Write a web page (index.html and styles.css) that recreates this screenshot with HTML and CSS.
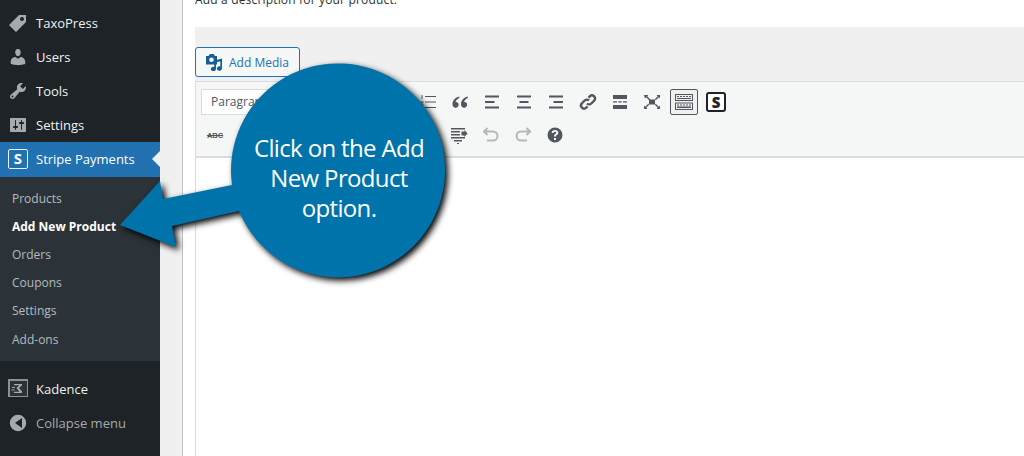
FILE: index.html
```html
<!DOCTYPE html>
<html lang="en">
<head>
<meta charset="utf-8">
<title>Add New Product</title>
<link rel="stylesheet" href="styles.css">
</head>
<body>
<div class="page">
  <aside class="sidebar">
    <ul class="menu">
      <li class="item"><svg class="mi" viewBox="0 0 20 20"><path d="M11 2h7v7L8 19l-7-7zm3 6c1.100 0 2-.9 2-2s-.9-2-2-2-2 .9-2 2 .9 2 2 2z"/></svg>TaxoPress</li>
      <li class="item"><svg class="mi" viewBox="0 0 20 20"><path d="M10 9.250c-2.270 0-2.730-3.440-2.730-3.440C7 4.020 7.820 2 9.970 2c2.160 0 2.980 2.020 2.710 3.810 0 0-.41 3.440-2.680 3.440zm0 2.570L12.720 10c2.390 0 4.520 2.330 4.520 4.530v2.490s-3.650 1.130-7.240 1.130c-3.650 0-7.240-1.130-7.240-1.130v-2.490c0-2.250 1.940-4.480 4.470-4.480z"/></svg>Users</li>
      <li class="item"><svg class="mi" viewBox="0 0 20 20"><path d="M16.680 9.770c-1.340 1.340-3.300 1.670-4.950.99l-5.410 6.520c-.99.99-2.590.99-3.580 0s-.99-2.590 0-3.570l6.520-5.420c-.68-1.650-.35-3.610.99-4.950 1.280-1.280 3.120-1.620 4.720-1.060l-2.890 2.890 2.820 2.820 2.860-2.870c.53 1.580.18 3.390-1.080 4.650zM3.810 16.210c.4.390 1.040.39 1.430 0 .4-.4.4-1.040 0-1.430-.39-.4-1.030-.4-1.430 0-.39.39-.39 1.030 0 1.430z"/></svg>Tools</li>
      <li class="item"><svg class="mi" viewBox="0 0 20 20"><path d="M18 16V4c0-.55-.45-1-1-1H3c-.55 0-1 .45-1 1v12c0 .55.45 1 1 1h14c.55 0 1-.45 1-1zM8 11h1c.55 0 1 .45 1 1s-.45 1-1 1H8v1.500c0 .28-.22.5-.5.5s-.5-.22-.5-.5V13H6c-.55 0-1-.45-1-1s.45-1 1-1h1V5.500c0-.28.22-.5.5-.5s.5.22.5.5V11zm5-2h-1c-.55 0-1-.45-1-1s.45-1 1-1h1V5.500c0-.28.22-.5.5-.5s.5.22.5.5V7h1c.55 0 1 .45 1 1s-.45 1-1 1h-1v5.500c0 .28-.22.5-.5.5s-.5-.22-.5-.5V9z"/></svg>Settings</li>
      <li class="item current"><span class="sbox">S</span>Stripe Payments</li>
    </ul>
    <ul class="submenu">
      <li>Products</li>
      <li class="on">Add New Product</li>
      <li>Orders</li>
      <li>Coupons</li>
      <li>Settings</li>
      <li class="last">Add-ons</li>
    </ul>
    <ul class="menu lower">
      <li class="item bright"><svg class="mi kad" viewBox="0 0 20 20"><rect x="0.500" y="0.500" width="19" height="17" fill="#2c3338" stroke="#8c8f94" stroke-width="1"/><path d="M1 1h18v1H2v15H1z" fill="#8c8f94"/><path d="M6 5h8v1.200l-3 2.800 3 3.500V14h-8v-1.200h5.500L8.500 9l3-2.800H6zM4 8h3v1H4zM3.500 10.500h3v1h-3z" fill="#a7aaad"/></svg>Kadence</li>
      <li class="item dim"><svg class="mi" viewBox="0 0 20 20"><path fill-rule="evenodd" d="M10 1.800a8.200 8.200 0 1 0 0 16.400 8.200 8.200 0 0 0 0-16.400zM14 15 7 10l7-5z"/></svg>Collapse menu</li>
    </ul>
  </aside>
  <main class="main">
    <section class="panel">
      <p class="desc">Add a description for your product.</p>
      <div class="wrap-band">
        <button class="media-btn">
          <svg class="media-ic" viewBox="0 0 18 18"><path fill-rule="evenodd" fill="#135e96" d="M1 3h2.500L5 1h3.500L10 3h2v8.500H1zM6.500 4.500a2.300 2.300 0 1 0 0 4.600 2.300 2.300 0 0 0 0-4.600z"/><path fill="#135e96" d="M17 5.500v10h-.1a2.500 2.200 0 1 1-1.600-2.100V8.300L11 9.500v6.500h-.1a2.500 2.200 0 1 1-1.600-2.100V7.500z"/></svg>
          Add Media
        </button>
      </div>
      <div class="editor">
        <div class="toolbar">
          <div class="row">
            <div class="select">Paragraph</div>
            <span class="tb"></span><span class="tb"></span><span class="tb"></span>
            <span class="tb"><svg viewBox="0 0 20 20"><path class="f" d="M7 4h11v1H7zM7 9.500h11v1H7zM7 15h11v1H7zM3.500 3h1v4h-1zM2.500 9.500h3v.7l-1.800 1.800h1.800v.8h-3v-.7l1.800-1.800H2.500zM2.500 14h3v3.500h-3v-.7h2v-.7h-1.500v-.7h1.500v-.7h-2z"/></svg></span>
            <span class="tb"><svg viewBox="0 0 20 20"><path class="f" d="M9.300 4.500C5.500 5.500 2.500 8.300 2.500 12.300c0 2 1.300 3.400 3.100 3.400s3-1.300 3-2.900-1.100-2.700-2.500-2.700c-.2 0-.4 0-.6.100.4-1.700 1.900-3.200 3.800-4.100zM17.800 4.500c-3.800 1-6.800 3.800-6.800 7.800 0 2 1.300 3.400 3.100 3.400s3-1.300 3-2.900-1.100-2.700-2.500-2.700c-.2 0-.4 0-.6.100.4-1.700 1.900-3.200 3.800-4.100z"/></svg></span>
            <span class="tb"><svg viewBox="0 0 20 20"><path class="f" d="M3 3.500h14v2H3zM3 9h9.500v2H3zM3 14.500h14v2H3z"/></svg></span>
            <span class="tb"><svg viewBox="0 0 20 20"><path class="f" d="M3 3.500h14v2H3zM5.500 9h9v2h-9zM3 14.500h14v2H3z"/></svg></span>
            <span class="tb"><svg viewBox="0 0 20 20"><path class="f" d="M3 3.500h14v2H3zM7.500 9H17v2H7.500zM3 14.500h14v2H3z"/></svg></span>
            <span class="tb"><svg viewBox="0 0 20 20"><path d="M9 11.500a3 3 0 0 0 4.300 0l3-3a3.100 3.100 0 0 0-4.300-4.400l-1.500 1.500" class="s thick"/><path d="M11 8.500a3 3 0 0 0-4.300 0l-3 3a3.100 3.100 0 0 0 4.300 4.400l1.500-1.500" class="s thick"/></svg></span>
            <span class="tb"><svg viewBox="0 0 20 20"><path class="f" d="M3 3h14v4H3zM3 9.300h4v1.300H3zM8.300 9.300h3.400v1.300H8.300zM13 9.300h4v1.300h-4zM3 13h14v4H3z"/></svg></span>
            <span class="tb"><svg viewBox="0 0 20 20"><path class="f" d="M7 7.500h6v5H7zM2 3h4.500L5.200 4.300l3 3-1 1-3-3L3 6.500zM18 3v3.500l-1.200-1.300-3 3-1-1 3-3L14.500 3zM2 17v-3.500l1.200 1.300 3-3 1 1-3 3L5.500 17zM18 17h-3.500l1.300-1.200-3-3 1-1 3 3 1.200-1.300z"/></svg></span>
            <span class="tb active"><svg class="sink" viewBox="0 0 20 20"><path class="f" d="M1 2h18v7H1zM1 10.500h18v7.500H1z"/><path class="k" d="M2 3h16v5H2zM2 11.500h16V17H2z"/><path class="f" d="M3 4h2v1H3zM6 4h2v1H6zM9 4h2v1H9zM12 4h2v1h-2zM15 4h2v1h-2zM3 6h14v1H3zM3 12.500h2v1H3zM6 12.500h2v1H6zM9 12.500h2v1H9zM12 12.500h2v1h-2zM15 12.500h2v1h-2zM3 14.500h14v1.500H3z"/></svg></span>
            <span class="tb"><span class="sbtn">S</span></span>
          </div>
          <div class="row">
            <span class="tb"><span class="abc">ABC</span></span>
            <span class="tb"></span><span class="tb wide"></span><span class="tb"></span><span class="tb"></span><span class="tb"></span><span class="tb"></span>
            <span class="tb"><svg viewBox="0 0 20 20"><path class="f" d="M2 3h14v1.500H2zM2 6h9v1.500H2zM2 9h9v1.500H2zM2 12h14v1.500H2zM5 15h8v1.500H5zM8 18h2v1H8zM12.500 6.500h3V5l3 3.500-3 3.500v-1.500h-3z"/></svg></span>
            <span class="tb"><svg viewBox="0 0 20 20"><path d="M6.500 3 3 6.500 6.500 10M3.500 6.500H12a4.500 4.500 0 0 1 0 9H6" class="s grey"/></svg></span>
            <span class="tb"><svg viewBox="0 0 20 20"><path d="M13.500 3 17 6.500 13.500 10M16.500 6.500H8a4.500 4.500 0 0 0 0 9h6" class="s grey"/></svg></span>
            <span class="tb"><svg viewBox="0 0 20 20"><path class="f" fill-rule="evenodd" d="M10 2.500a7.500 7.500 0 1 0 0 15 7.500 7.500 0 0 0 0-15zM11 13v2H9v-2zM10 5c2 0 3.300 1.100 3.300 2.700 0 1.100-.6 1.800-1.500 2.400-.6.400-.8.700-.8 1.400H9c0-1.300.4-1.900 1.200-2.500.6-.4 1-.8 1-1.300 0-.6-.5-1-1.200-1s-1.300.4-1.300 1.200H6.700C6.700 6.200 8 5 10 5z"/></svg></span>
          </div>
        </div>
      </div>
    </section>
  </main>
  <div class="callout">
    <svg class="shape" viewBox="0 0 340 240" aria-hidden="true"><path d="M0 161 40 117 43 135 112 121A107 107 0 1 1 119 147L52 162 56 183Z"/></svg>
    <p class="bubble">Click on the Add New Product option.</p>
  </div>
</div>
</body>
</html>
```
FILE: styles.css
```css
* { box-sizing: border-box; }
html, body { margin: 0; padding: 0; height: 456px; overflow: hidden; }
body { font-family: "Open Sans", sans-serif; font-size: 13px; background: #f0f0f1; }
ul { list-style: none; margin: 0; padding: 0; }
.page { display: flex; height: 456px; position: relative; overflow: hidden; }

.sidebar { width: 160px; flex: none; background: #1d2327; color: #f0f0f1; padding-top: 6px; }
.item { display: flex; align-items: center; height: 34px; padding-left: 8px; gap: 8px; color: #f0f0f1; position: relative; }
.mi { width: 20px; height: 20px; fill: #a7aaad; flex: none; }
.current { height: 35px; padding-bottom: 1px; background: #2271b1; color: #fff; }
.current::after { content: ""; position: absolute; right: 0; top: 9px; border: 8px solid transparent; border-right-color: #f0f0f1; border-left: 0; }
.sbox { width: 20px; height: 20px; flex: none; border: 1.500px solid #f0f0f1; border-radius: 2px; background: #2271b1; font: 700 15px/17px "Open Sans", sans-serif; text-align: center; color: #fff; }
.submenu { background: #2c3338; height: 184px; padding-top: 8px; color: rgba(240,246,252,.7); font-size: 12px; }
.submenu li { height: 28px; line-height: 28px; padding-left: 12px; }
.submenu .on { color: #fff; font-weight: 700; }
.submenu .last { margin-top: 1px; }
.lower { margin-top: 11px; }
.dim { color: #a7aaad; }

.main { flex: 1; padding-left: 22px; min-width: 0; }
.panel { background: #fff; height: 466px; margin-top: -10px; border-left: 1px solid #c3c4c7; padding-left: 12px; }
.desc { margin: 0; height: 37px; padding-top: 2px; font-size: 12px; letter-spacing: .17px; line-height: 16px; color: #2c3338; }
.wrap-band { background: #f0f0f1; height: 54px; padding-top: 20px; display: flex; }
.media-btn { height: 30px; width: 105px; display: flex; align-items: center; gap: 6px; padding: 0 0 0 9px; background: #f6f7f7; border: 1px solid #2271b1; border-radius: 3px; color: #2271b1; font: 12px "Open Sans", sans-serif; }
.media-ic { width: 18px; height: 18px; }
.editor { border: 1px solid #dcdcde; border-right: 0; border-bottom: 0; height: 375px; }
.toolbar { height: 76px; background: #f5f6f6; border-bottom: 2px solid #dcdcde; padding: 4px 5px 0; }
.row { display: flex; gap: 4px; height: 32px; align-items: center; }
.row + .row { margin-top: 1px; }
.select { width: 113px; height: 26px; background: #fff; border: 1px solid #dcdcde; padding-left: 9px; line-height: 24px; color: #50575e; font-size: 12px; }
.tb { width: 28px; height: 26px; flex: none; display: flex; align-items: center; justify-content: center; }
.tb.wide { width: 48px; }
.tb svg { width: 20px; height: 20px; }
.tb.active { border: 1px solid #50575e; border-radius: 2px; background: #f0f0f1; }
.f { fill: #50575e; }
.k { fill: #f0f0f1; }
.s { fill: none; stroke: #50575e; stroke-width: 2; }
.s.thick { stroke-width: 2.400; }
.s.grey { stroke: #b5b7ba; }
.sbtn { width: 20px; height: 20px; border: 2px solid #1d2327; border-radius: 3px; background: #fff; color: #1d2327; font: 800 15px/16px "Open Sans", sans-serif; text-align: center; }
.abc { font: 700 7.500px "Liberation Sans", sans-serif; color: #50575e; text-decoration: line-through; }

.callout { position: absolute; left: 120px; top: 64px; width: 340px; height: 240px; }
.shape { width: 340px; height: 240px; overflow: visible; fill: #0073aa; filter: drop-shadow(3px 3px 3px #000); }
.bubble { position: absolute; left: 121px; top: 69px; width: 196px; margin: 0; text-align: center; color: #fff; font: 24px/30px "Open Sans", sans-serif; letter-spacing: -.65px; }
```
